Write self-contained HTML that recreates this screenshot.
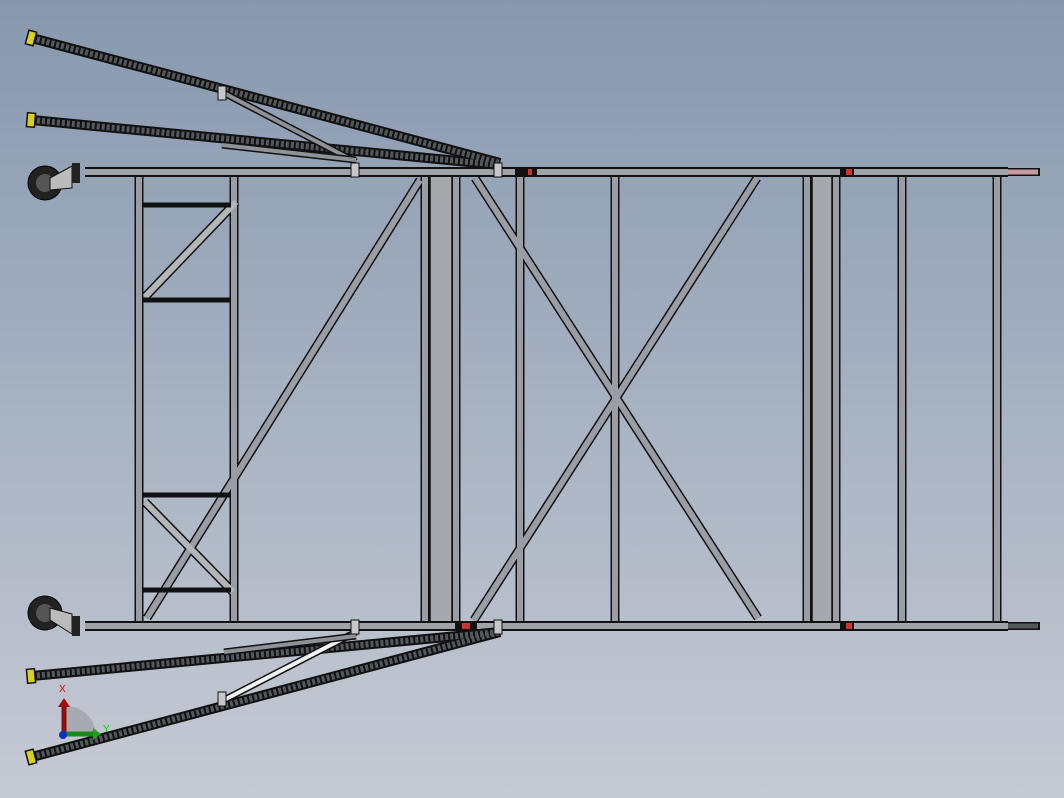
<!DOCTYPE html>
<html><head><style>
html,body{margin:0;padding:0;width:1064px;height:798px;overflow:hidden}
body{background:linear-gradient(#8798ae 0%,#a3afc0 45%,#c6cad4 100%)}
svg{position:absolute;left:0;top:0}
</style></head><body>
<svg width="1064" height="798" viewBox="0 0 1064 798" xmlns="http://www.w3.org/2000/svg">
<defs>
<g id="x"></g>
</defs>
<!-- frame tubes: outline then fill -->
<g stroke-linecap="butt">
<!-- verticals -->
<g stroke="#111" stroke-width="9">
<line x1="139" y1="175" x2="139" y2="622"/><line x1="234" y1="175" x2="234" y2="622"/>
<line x1="425" y1="175" x2="425" y2="624"/><line x1="456" y1="175" x2="456" y2="624"/>
<line x1="520" y1="175" x2="520" y2="624"/><line x1="615" y1="175" x2="615" y2="624"/>
<line x1="807" y1="175" x2="807" y2="624"/><line x1="836" y1="175" x2="836" y2="624"/>
<line x1="902" y1="175" x2="902" y2="624"/><line x1="997" y1="175" x2="997" y2="624"/>
<line x1="420" y1="180" x2="147" y2="618"/>
<line x1="475" y1="178" x2="758" y2="618"/><line x1="757" y1="178" x2="474" y2="620"/>
<line x1="236" y1="202" x2="145" y2="297"/><line x1="145" y1="502" x2="233" y2="592"/>
</g>
<rect x="430" y="176" width="22" height="447" fill="#a5a9ae" stroke="#111" stroke-width="1.5"/>
<rect x="812" y="176" width="20" height="447" fill="#a5a9ae" stroke="#111" stroke-width="1.5"/>
<g stroke="#9a9ea4" stroke-width="6">
<line x1="139" y1="175" x2="139" y2="622"/><line x1="234" y1="175" x2="234" y2="622"/>
<line x1="425" y1="175" x2="425" y2="624"/><line x1="456" y1="175" x2="456" y2="624"/>
<line x1="520" y1="175" x2="520" y2="624"/><line x1="615" y1="175" x2="615" y2="624"/>
<line x1="807" y1="175" x2="807" y2="624"/><line x1="836" y1="175" x2="836" y2="624"/>
<line x1="902" y1="175" x2="902" y2="624"/><line x1="997" y1="175" x2="997" y2="624"/>
<line x1="420" y1="180" x2="147" y2="618"/>
<line x1="475" y1="178" x2="758" y2="618"/><line x1="757" y1="178" x2="474" y2="620"/>
</g>
<g stroke="#b4b6b8" stroke-width="6">
<line x1="236" y1="202" x2="145" y2="297"/><line x1="145" y1="502" x2="233" y2="592"/>
</g>
<!-- rungs -->
<g stroke="#111" stroke-width="5">
<line x1="143" y1="205" x2="231" y2="205"/><line x1="143" y1="300" x2="231" y2="300"/>
<line x1="143" y1="495" x2="231" y2="495"/><line x1="143" y1="590" x2="231" y2="590"/>
</g>
<!-- rails -->
<g stroke="#111" stroke-width="10">
<line x1="85" y1="172" x2="1008" y2="172"/><line x1="85" y1="626" x2="1008" y2="626"/>
</g>
<g stroke="#a0a4a8" stroke-width="6">
<line x1="85" y1="172" x2="1008" y2="172"/><line x1="85" y1="626" x2="1008" y2="626"/>
</g>
<line x1="1008" y1="172" x2="1040" y2="172" stroke="#111" stroke-width="8"/>
<line x1="1008" y1="172" x2="1038" y2="172" stroke="#c89aa4" stroke-width="5"/>
<line x1="1008" y1="626" x2="1040" y2="626" stroke="#111" stroke-width="8"/>
<line x1="1008" y1="626" x2="1038" y2="626" stroke="#555" stroke-width="5"/>
<rect x="515" y="168" width="22" height="8" fill="#111"/>
<rect x="528" y="169" width="4" height="6" fill="#c33"/>
<rect x="840" y="168" width="14" height="8" fill="#111"/><rect x="846" y="169" width="6" height="6" fill="#c33"/>
<rect x="455" y="622" width="22" height="8" fill="#111"/><rect x="462" y="623" width="8" height="6" fill="#c33"/>
<rect x="840" y="622" width="14" height="8" fill="#111"/><rect x="846" y="623" width="6" height="6" fill="#c33"/>
<!-- outriggers -->
<g stroke="#111" stroke-width="10">
<line x1="32" y1="38" x2="500" y2="163"/><line x1="32" y1="120" x2="500" y2="165"/>
<line x1="32" y1="676" x2="500" y2="632"/><line x1="32" y1="757" x2="500" y2="632"/>
</g>
<g stroke="#55585c" stroke-width="6" stroke-dasharray="3 2">
<line x1="32" y1="38" x2="500" y2="163"/><line x1="32" y1="120" x2="500" y2="165"/>
<line x1="32" y1="676" x2="500" y2="632"/><line x1="32" y1="757" x2="500" y2="632"/>
</g>
<line x1="222" y1="92" x2="356" y2="162" stroke="#111" stroke-width="7"/>
<line x1="222" y1="92" x2="356" y2="162" stroke="#8e9296" stroke-width="4"/>
<line x1="222" y1="145" x2="356" y2="160" stroke="#111" stroke-width="7"/>
<line x1="222" y1="145" x2="356" y2="160" stroke="#8e9296" stroke-width="4"/>
<line x1="224" y1="700" x2="356" y2="632" stroke="#111" stroke-width="7"/>
<line x1="224" y1="700" x2="356" y2="632" stroke="#f2f2f2" stroke-width="4"/>
<line x1="224" y1="652" x2="356" y2="636" stroke="#111" stroke-width="7"/>
<line x1="224" y1="652" x2="356" y2="636" stroke="#8e9296" stroke-width="4"/>
</g>
<!-- clamps -->
<g fill="#c8c8c8" stroke="#111" stroke-width="1">
<rect x="218" y="86" width="8" height="14"/><rect x="351" y="163" width="8" height="14"/>
<rect x="494" y="163" width="8" height="14"/><rect x="351" y="620" width="8" height="14"/>
<rect x="494" y="620" width="8" height="14"/><rect x="218" y="692" width="8" height="14"/>
</g>
<!-- end caps -->
<g fill="#d8d020" stroke="#111" stroke-width="1.5">
<rect x="27" y="31" width="8" height="14" transform="rotate(15 31 38)"/>
<rect x="27" y="113" width="8" height="14" transform="rotate(5 31 120)"/>
<rect x="27" y="669" width="8" height="14" transform="rotate(-5 31 676)"/>
<rect x="27" y="750" width="8" height="14" transform="rotate(-15 31 757)"/>
</g>
<!-- wheels -->
<g>
<circle cx="45" cy="183" r="17" fill="#222" stroke="#000"/><circle cx="45" cy="183" r="9" fill="#555"/>
<path d="M50 178 L72 166 L72 188 L50 190 Z" fill="#bbb" stroke="#111"/>
<rect x="72" y="163" width="8" height="20" fill="#222"/>
<circle cx="45" cy="613" r="17" fill="#222" stroke="#000"/><circle cx="45" cy="613" r="9" fill="#555"/>
<path d="M50 608 L72 614 L72 634 L50 620 Z" fill="#bbb" stroke="#111"/>
<rect x="72" y="616" width="8" height="20" fill="#222"/>
</g>
<!-- triad -->
<path d="M66 736 L66 706 A30 30 0 0 1 96 736 Z" fill="#9c9ea2" opacity="0.7"/>
<line x1="64" y1="734" x2="64" y2="706" stroke="#8a1010" stroke-width="5"/>
<path d="M58 707 L64 698 L70 707 Z" fill="#a01010"/>
<line x1="64" y1="734" x2="94" y2="734" stroke="#1a8a1a" stroke-width="5"/>
<path d="M93 728 L101 734 L93 740 Z" fill="#20a020"/>
<circle cx="63" cy="735" r="4" fill="#1030c0"/>
<text x="59" y="692" font-family="Liberation Sans,sans-serif" font-size="10" fill="#e00">X</text>
<text x="103" y="732" font-family="Liberation Sans,sans-serif" font-size="10" fill="#0c0">Y</text>
</svg>
</body></html>
